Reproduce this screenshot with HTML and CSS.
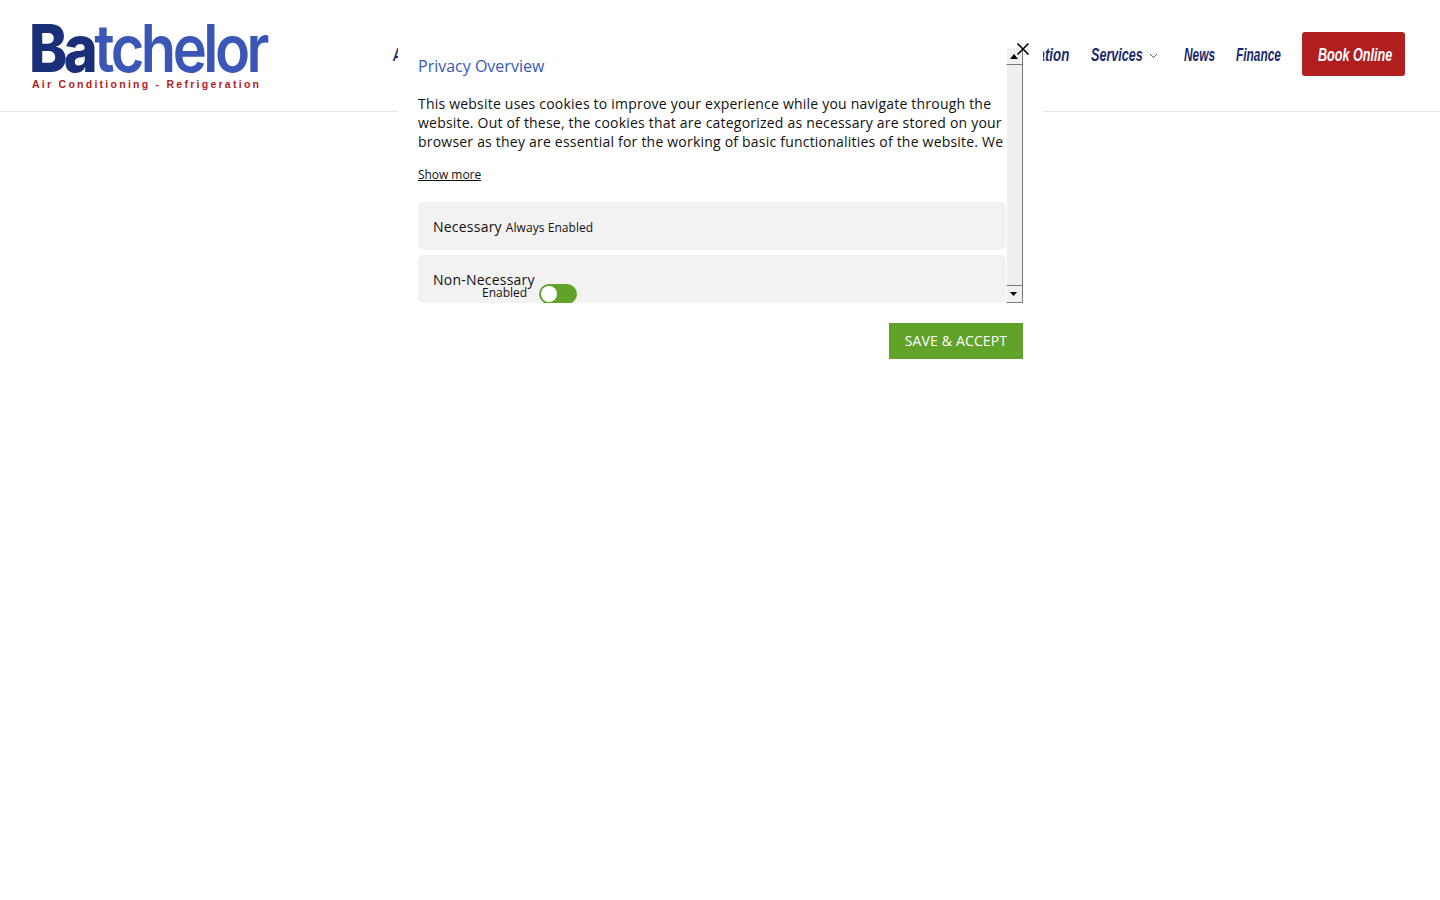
FILE: index.html
```html
<!DOCTYPE html>
<html lang="en">

<head>
    <meta charset="utf-8">
    <meta name="viewport" content="width=device-width, initial-scale=1.0">
    <title>Batchelor Air Conditioning</title>
    <link rel="stylesheet" href="styles.css">
</head>

<body>
    <header class="navigation">
        <a href="#" class="nav_logo">
            <svg width="240" height="72" viewBox="0 0 240 72">
                <text class="logo_name" x="-3" y="52" textLength="237" lengthAdjust="spacingAndGlyphs"><tspan class="logo_dark">Ba</tspan>tchelor</text>
                <text class="logo_tag" x="0" y="68" textLength="227">Air Conditioning - Refrigeration</text>
            </svg>
        </a>
        <nav class="nav_links">
            <a href="#" class="nav_first"><span>About</span></a>
            <a href="#" class="nav_install"><span>Installation</span></a>
            <a href="#" class="nav_services"><span>Services</span>
                <svg width="9" height="6" viewBox="0 0 9 6"><path d="M1 1l3.500 3.500L8 1" fill="none" stroke="#4a5a80" stroke-width="1"/></svg>
            </a>
            <a href="#" class="nav_news"><span>News</span></a>
            <a href="#" class="nav_finance"><span>Finance</span></a>
            <a href="#" class="nav_book"><span>Book Online</span></a>
        </nav>
    </header>

    <div class="modal">
        <button class="modal_close" aria-label="Close">
            <svg width="14" height="14" viewBox="0 0 14 14"><path d="M1.500 1.500l11 11M12.500 1.500l-11 11" stroke="#000" stroke-width="1.600"/></svg>
        </button>
        <div class="modal_scroll">
            <div class="modal_content">
                <h4 class="modal_title">Privacy Overview</h4>
                <p class="modal_text">This website uses cookies to improve your experience while you navigate through the website. Out of these, the cookies that are categorized as necessary are stored on your browser as they are essential for the working of basic functionalities of the website. We</p>
                <a href="#" class="modal_more">Show more</a>
                <div class="tab">
                    <span class="tab_name">Necessary</span>
                    <span class="tab_note">Always Enabled</span>
                </div>
                <div class="tab tab_cut">
                    <span class="tab_name">Non-Necessary</span>
                    <div class="tab_switch">
                        <span class="tab_note">Enabled</span>
                        <span class="switch"></span>
                    </div>
                </div>
            </div>
            <div class="scrollbar">
                <div class="scrollbar_btn"><svg width="8" height="5" viewBox="0 0 8 5"><path d="M4 0l4 5H0z"/></svg></div>
                <div class="scrollbar_track"></div>
                <div class="scrollbar_btn"><svg width="7" height="4" viewBox="0 0 7 4"><path d="M0 0h7L3.500 4z"/></svg></div>
            </div>
        </div>
        <div class="modal_foot">
            <button class="modal_save">SAVE &amp; ACCEPT</button>
        </div>
    </div>
</body>

</html>
```

FILE: styles.css
```css
body {
    margin: 0;
    font-family: "Open Sans", sans-serif;
    background-color: white;
}

/* --------- NAV --------------- */
.navigation {
    display: flex;
    align-items: center;
    height: 111px;
    padding: 0 35px 0 32px;
    border-bottom: 1px solid #e6e6e6;
}

.nav_logo {
    display: block;
    width: 236px;
    height: 72px;
    flex: none;
}

.logo_name {
    font-family: Inter, sans-serif;
    font-size: 66px;
    font-weight: 600;
    letter-spacing: -4px;
    fill: #3a57b8;
}

.logo_dark {
    font-weight: 800;
    fill: #1a2f7a;
}

.logo_tag {
    font-family: "Liberation Sans", sans-serif;
    font-size: 10.500px;
    font-weight: 700;
    fill: #b01e1e;
}

.nav_links {
    display: flex;
    flex: 1;
    align-items: center;
    gap: 21px;
    margin-left: 125px;
}

.nav_links a {
    display: flex;
    align-items: center;
    font-family: "Liberation Sans", sans-serif;
    font-size: 18px;
    font-weight: 700;
    font-style: italic;
    text-decoration: none;
    white-space: nowrap;
    color: #1a2a6c;
}

.nav_links span {
    display: block;
    transform: scaleX(.66);
    transform-origin: left;
}

.nav_links .nav_first {
    margin-right: auto;
}

.nav_first span {
    width: 40px;
}

.nav_links .nav_install span {
    width: 71px;
    transform: scaleX(.74);
}

.nav_links .nav_services span {
    width: 52px;
    transform: scaleX(.7);
}

.nav_services svg {
    margin-left: 6px;
}

.nav_links .nav_services {
    margin-right: 5px;
}

.nav_news span {
    width: 31px;
}

.nav_finance span {
    width: 45px;
}

.nav_links .nav_book {
    box-sizing: border-box;
    height: 44px;
    margin-bottom: 4px;
    padding: 4px 13px 0 16px;
    border-radius: 3px;
    color: white;
    background-color: #b01e1e;
}

.nav_links .nav_book span {
    width: 74px;
    transform: scaleX(.7);
}

/* -------------- MODAL ------------ */
.modal {
    position: absolute;
    top: 28px;
    left: 398px;
    width: 625px;
    height: 351px;
    padding-right: 20px;
    background-color: white;
}

.modal_close {
    position: absolute;
    top: 14px;
    left: 618px;
    width: 14px;
    height: 14px;
    padding: 0;
    border: none;
    background: none;
}

.modal_scroll {
    display: flex;
    height: 255px;
    margin-top: 20px;
    padding-left: 20px;
}

.modal_content {
    flex: 1;
    overflow: hidden;
}

.modal_title {
    margin: 8px 0 18px;
    font-size: 16px;
    line-height: 20px;
    font-weight: 400;
    color: #3a57b8;
}

.modal_text {
    height: 57px;
    margin: 0 0 15px;
    overflow: hidden;
    font-size: 14px;
    line-height: 19px;
    letter-spacing: .21px;
    color: #111;
}

.modal_more {
    display: block;
    width: max-content;
    font-size: 12px;
    line-height: 17px;
    letter-spacing: -.05px;
    color: #111;
}

.tab {
    display: flex;
    align-items: center;
    gap: 4px;
    height: 48px;
    margin-top: 5px;
    padding-left: 15px;
    border-radius: 5px;
    background-color: #f2f2f2;
    color: #111;
}

.modal_more + .tab {
    margin-top: 19px;
}

.tab_name {
    font-size: 14px;
    letter-spacing: .22px;
}

.tab_note {
    margin-top: 3px;
    font-size: 12px;
    letter-spacing: .06px;
}

.tab_cut {
    position: relative;
}

.tab_switch {
    position: absolute;
    top: 29px;
    left: 64px;
    display: flex;
    gap: 12px;
}

.tab_switch .tab_note {
    margin-top: 0;
    letter-spacing: 0;
}

.switch {
    position: relative;
    display: block;
    width: 38px;
    height: 20px;
    border-radius: 10px;
    background-color: #61a229;
}

.switch::before {
    content: "";
    position: absolute;
    top: 2px;
    left: 2px;
    width: 16px;
    height: 16px;
    border-radius: 50%;
    background-color: white;
}

/* ------------ SCROLLBAR ------------- */
.scrollbar {
    display: flex;
    flex-direction: column;
    width: 17px;
}

.scrollbar_btn {
    display: flex;
    align-items: center;
    justify-content: center;
    height: 17px;
    flex: none;
    box-sizing: border-box;
    padding-right: 2px;
    background-color: #f0f0f0;
    border-left: 1px solid white;
    border-right: 1px solid #777;
    border-bottom: 1px solid #777;
}

.scrollbar_track {
    flex: 1;
    box-sizing: border-box;
    background-color: #efefef;
    border-left: 1px solid white;
    border-right: 1px solid #777;
    border-bottom: 1px solid #777;
}

/* ------------ FOOT ------------- */
.modal_foot {
    display: flex;
    justify-content: flex-end;
    margin-top: 20px;
}

.modal_save {
    width: 134px;
    height: 36px;
    padding: 0 0 2px;
    border: none;
    font-family: "Open Sans", sans-serif;
    font-size: 14px;
    letter-spacing: .15px;
    color: white;
    background-color: #61a229;
}
```
